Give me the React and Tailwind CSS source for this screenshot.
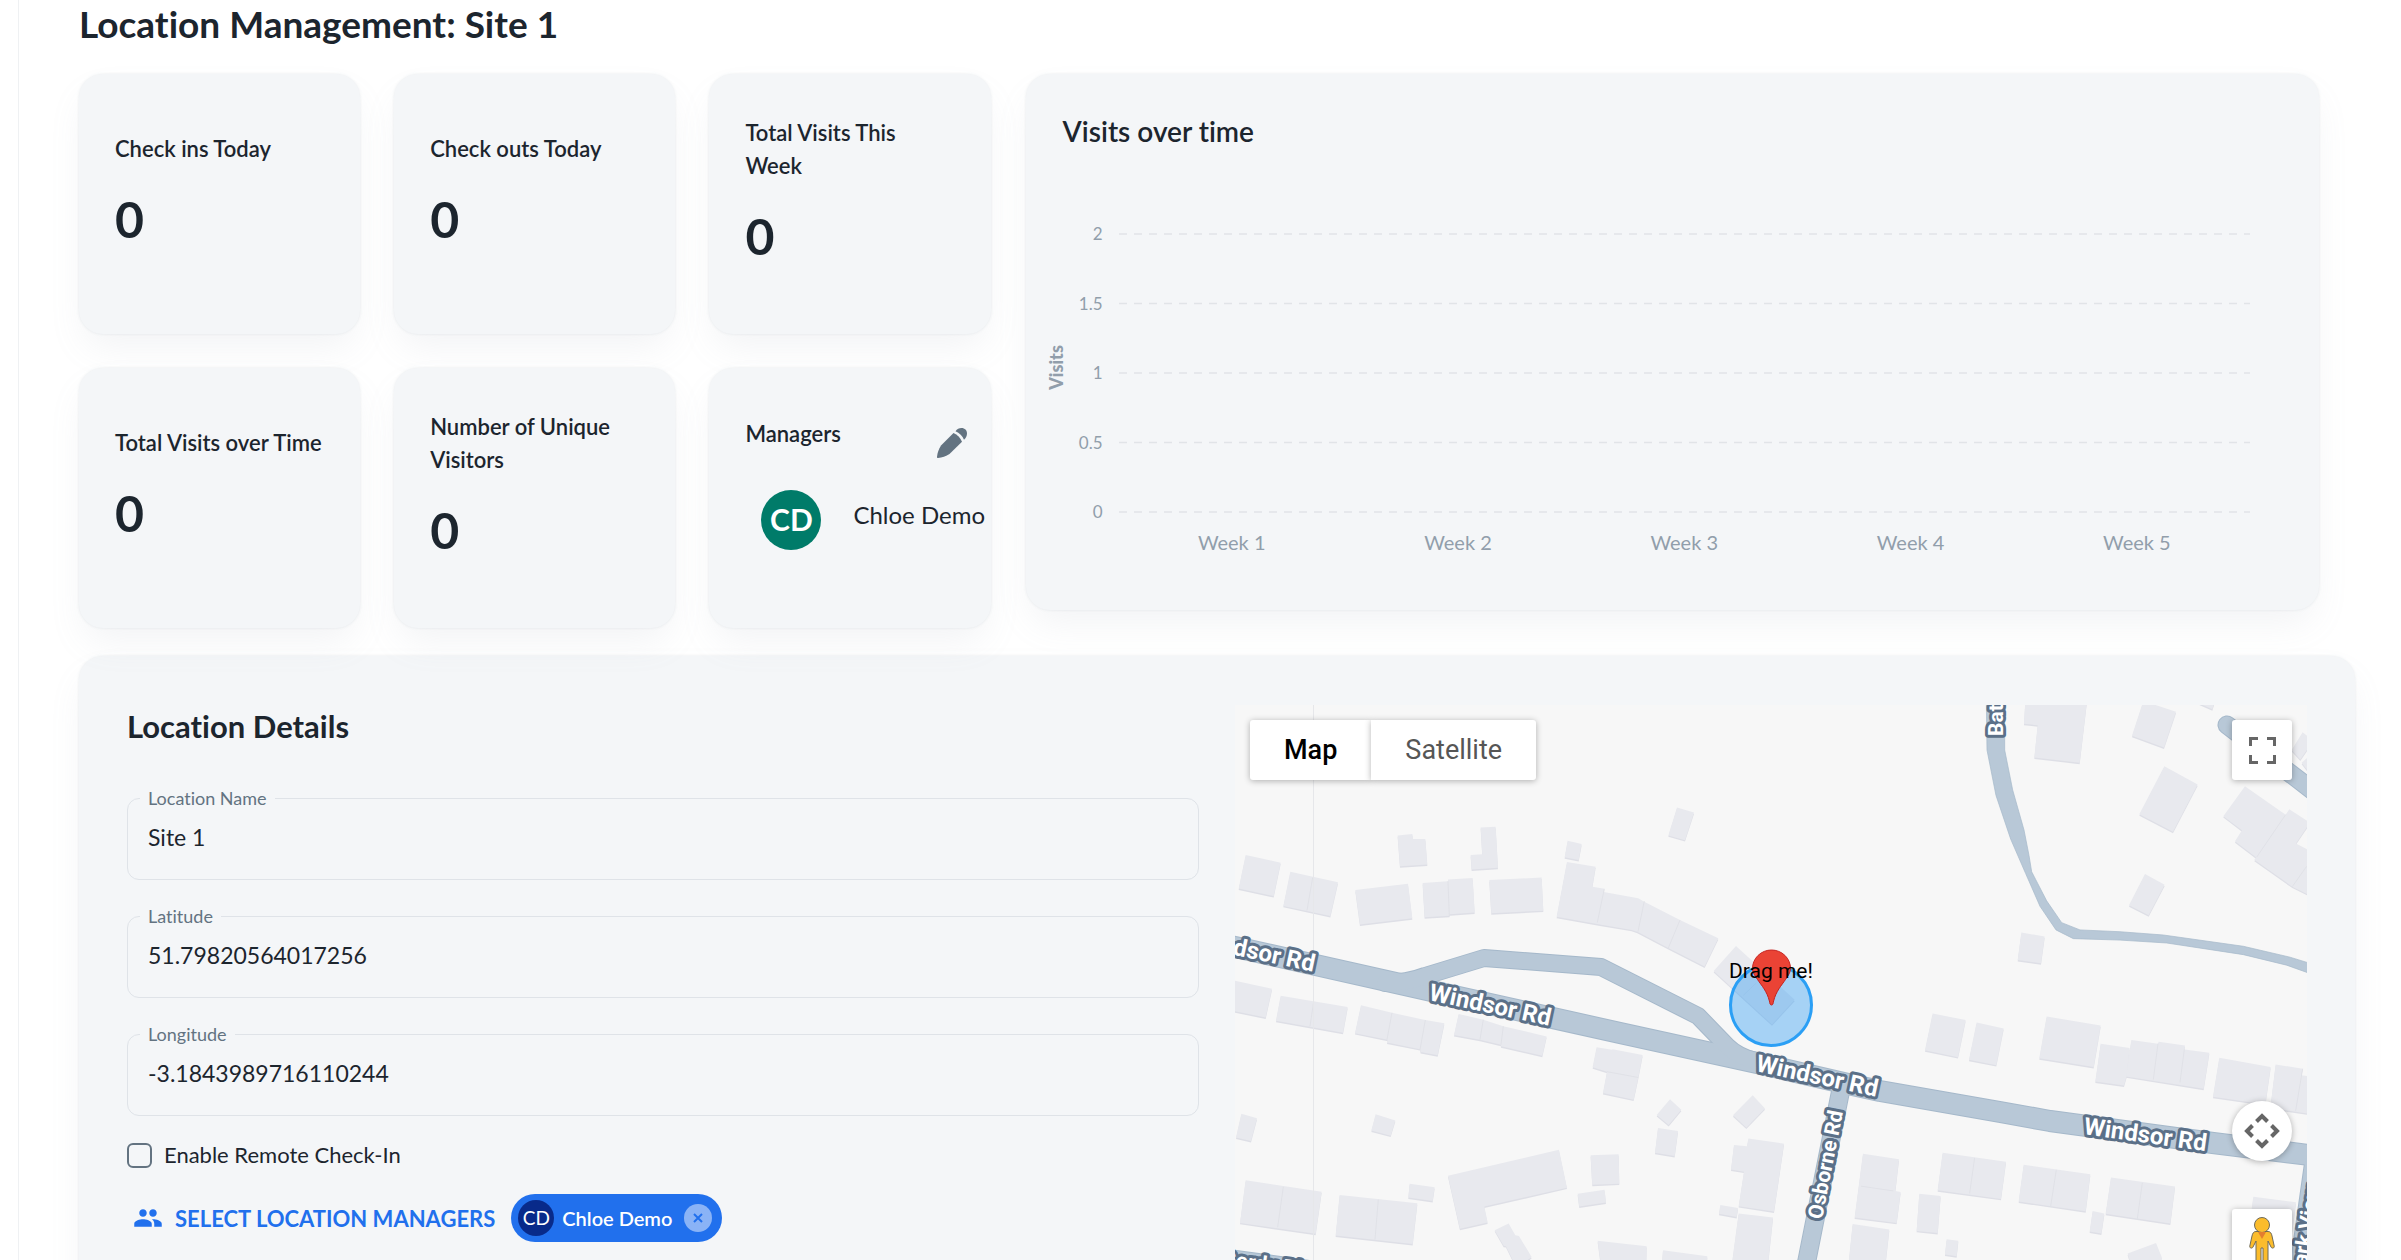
import { useState } from 'react';
import { MdGroup } from 'react-icons/md';

const stats = [
  { label: 'Check ins Today', value: 0 },
  { label: 'Check outs Today', value: 0 },
  { label: 'Total Visits This Week', value: 0 },
  { label: 'Total Visits over Time', value: 0 },
  { label: 'Number of Unique Visitors', value: 0 },
];

const ticks = ['2', '1.5', '1', '0.5', '0'];
const weeks = ['Week 1', 'Week 2', 'Week 3', 'Week 4', 'Week 5'];

// Building outlines, grouped by map tile. Every tile has its own coordinates.
const tiles = [
  {
    id: 'west',
    transform: 'translate(-15 -15) scale(0.3333 0.3635)',
    buildings: [
      '77,454 182,475 161,567 56,546',
      '211,500 354,529 331,622 190,594',
      '406,550 564,533 577,628 420,645',
      '608,531 684,526 684,521 758,517 764,612 690,617 688,621 614,625',
      '808,523 965,516 970,607 814,614',
      '533,400 577,396 579,410 616,410 622,480 540,485',
      '782,378 827,376 834,489 755,494 752,454 787,452',
      '1043,415 1085,424 1076,468 1034,460',
      '1041,473 1127,486 1117,541 1153,547 1151,556 1255,573 1270,581 1380,633 1495,683 1454,761 1345,710 1252,665 1235,660 1140,645 1010,624',
      '40,799 156,822 137,901 40,883',
      '182,841 383,872 369,943 168,910',
      '423,867 516,888 616,908 673,917 653,1005 602,996 600,988 501,970 503,962 405,944',
      '716,891 790,907 850,925 980,953 967,1006 843,980 843,976 780,962 702,949',
      '1130,983 1176,990 1178,988 1268,1004 1255,1066 1241,1127 1149,1109 1161,1050 1118,1038',
      '64,1166 111,1178 93,1241 48,1231',
      '467,1167 526,1184 512,1226 454,1212',
      '77,1349 305,1380 287,1496 60,1466',
      '359,1389 592,1412 578,1524 347,1501',
      '569,1358 644,1368 638,1406 565,1396',
      '684,1336 1017,1265 1041,1369 793,1421 803,1465 720,1482',
      '1112,1280 1196,1277 1198,1358 1117,1361',
      '1073,1386 1154,1375 1158,1410 1078,1421',
      '824,1486 866,1468 886,1500 897,1502 935,1560 890,1590 858,1530 851,1529',
      '1133,1515 1280,1530 1276,1700 1160,1700',
    ],
    walls: 'M278 516L261 607M684 526L688 621M1153 547L1132 640M281 858L270 925M516 888L501 962M616 908L600 990M790 907L780 962M850 925L843 976M190 1367L173 1478M475 1402L465 1512M1273 581L1254 665M1380 633L1345 710M1161 1050L1255 1066',
  },
  {
    id: 'center',
    transform: 'translate(365 -15) scale(0.3333 0.3635)',
    buildings: [
      '231,323 282,337 255,413 205,400',
      '408,704 584,852 516,920 341,773',
      '998,890 1097,908 1074,1010 975,991',
      '1130,915 1211,931 1189,1032 1107,1017',
      '210,1126 244,1155 206,1197 170,1169',
      '174,1205 234,1213 224,1282 165,1273',
      '458,1115 495,1151 439,1204 399,1170',
      '445,1234 552,1248 522,1435 416,1420 432,1325 393,1319 402,1252 441,1255',
      '361,1417 414,1425 410,1450 357,1441',
      '416,1440 519,1451 490,1700 378,1700',
      '189,1541 322,1558 310,1700 176,1700',
      '789,1276 897,1291 886,1378 902,1381 890,1466 764,1451',
      '758,1469 868,1484 842,1700 732,1700',
      '958,1386 1022,1392 1013,1494 950,1488',
      '1040,1511 1075,1515 1070,1558 1035,1553',
      '1028,1273 1218,1298 1203,1400 1013,1376',
    ],
    walls: 'M1124 1287L1109 1385M783 1365L880 1378M470 805L430 840',
  },
  {
    id: 'east',
    transform: 'translate(745 -15) scale(0.3333 0.3635)',
    buildings: [
      '136,30 321,30 299,200 163,186 173,97 132,93',
      '490,30 588,60 552,158 456,126',
      '640,30 705,30 697,53',
      '553,210 653,260 579,390 478,342',
      '495,506 554,536 506,620 447,592',
      '124,667 194,678 183,752 113,743',
      '200,898 362,923 341,1037 178,1013',
      '362,973 449,985 440,1062 432,1088 346,1077',
      '454,963 534,973 536,968 615,978 613,989 688,998 671,1097 438,1063',
      '718,1012 872,1037 856,1140 699,1119',
      '887,1030 968,1042 964,1060 990,1063 990,1166 871,1150',
      '131,1306 331,1332 317,1434 116,1407',
      '393,1341 585,1366 571,1468 377,1441',
      '338,1433 373,1440 364,1495 329,1490',
      '443,1550 528,1521 545,1560 540,1620 470,1640',
      '820,1394 948,1409 935,1500 805,1500',
      '968,116 1000,140 961,191 935,165',
      '965,200 990,180 990,230',
      '795,265 917,343 928,328 990,365 948,422 990,442 990,565 937,541 823,467 828,460 765,416 786,386 730,347',
    ],
    walls: 'M917 343L830 460M534 973L520 1072M613 989L600 1080M229 1320L212 1420M487 1356L472 1455M968 1042L947 1158M980 485L937 541',
  },
];

const roads = [
  { width: 20, d: 'M-20 238L0 242L192 285L385 328L522 358L613 379L645 386L765 407L815 416L978 438L1090 452' },
  { width: 16, d: 'M150 278Q172 278 190 271L249 253L366 262L463 311L492 341Q502 351 520 356' },
  { width: 17, d: 'M606 384L572 555L558 625' },
  { width: 17, d: 'M992 20L1090 95' },
  { width: 17, d: 'M1079 455L1062 575L1056 625' },
  { width: 20, d: 'M-20 553L110 571' },
];

const batRoad =
  '19,30 21,165 48,290 92,410 137,505 180,595 228,660 280,684 420,688 560,696 790,728 920,757 990,780 990,752 930,735 790,705 550,674 420,665 300,660 245,640 200,580 155,500 147,455 132,385 98,275 74,165 74,30';

const roadLabels = [
  { text: 'Windsor Rd', x: -43, y: 241, angle: 12, size: 24 },
  { text: 'Windsor Rd', x: 193, y: 295, angle: 12, size: 24 },
  { text: 'Windsor Rd', x: 520, y: 366, angle: 12, size: 24 },
  { text: 'Windsor Rd', x: 848, y: 429, angle: 8, size: 24 },
  { text: 'Osborne Rd', x: 587, y: 515, angle: -79, size: 21 },
  { text: 'Park View', x: 1070, y: 574, angle: -81, size: 21 },
  { text: 'Bat', x: 768, y: 31, angle: -90, size: 21 },
  { text: 'Gordy Pl', x: -14, y: 560, angle: 8, size: 21 },
];

function Card({ className = '', children }) {
  return (
    <div className={`rounded-3xl bg-[#f4f6f8] shadow-[0_0_3px_rgba(145,158,171,0.2),0_18px_36px_-6px_rgba(145,158,171,0.12)] ${className}`}>
      {children}
    </div>
  );
}

function StatCard({ label, value }) {
  return (
    <Card className="flex h-[260px] flex-col justify-center px-9 pb-[3px]">
      <h3 className="text-[22px] leading-[33px] font-semibold">{label}</h3>
      <p className="my-[18px] text-[50px] leading-[72px] font-bold">{value}</p>
    </Card>
  );
}

function PenIcon() {
  return (
    <svg className="size-[30px]" viewBox="0 0 30 30" fill="currentColor">
      <path d="M18.500 3.200C20 1.200 22 0 24.500 0 27.800 0 30 2.400 30 5.400c0 2.500-1.200 4.600-3 6.300C25.500 8 22.500 4.800 18.500 3.200z" />
      <path d="M16.500 5c3.800 1.500 7 4.800 8.500 8.700L12.500 26C9 28.400 5 29.700 1 30c-.8 0-1-.3-1-1 .3-4 1.800-8 4-11.500z" />
    </svg>
  );
}

function ManagersCard() {
  return (
    <Card className="h-[260px] pt-11 pl-9">
      <div className="flex items-start justify-between pr-6">
        <h3 className="text-[22px] leading-[44px] font-semibold">Managers</h3>
        <button type="button" aria-label="Edit managers" className="mt-4 text-[#637381]">
          <PenIcon />
        </button>
      </div>
      <div className="flex gap-8 pt-8 pl-4">
        <span className="flex size-[60px] shrink-0 items-center justify-center rounded-full bg-[#007b69] pb-0.5 text-[30px] font-bold text-white">
          CD
        </span>
        <span className="text-2xl leading-[50px] whitespace-nowrap">Chloe Demo</span>
      </div>
    </Card>
  );
}

function VisitsChart() {
  return (
    <Card className="flex h-[536px] flex-col px-[37px] pt-9">
      <h2 className="text-[28px] leading-[42px] font-semibold">Visits over time</h2>
      <div className="flex flex-1 pt-[68px] text-[#919eab]">
        <div className="flex h-[294px] w-0 items-center justify-center">
          <span className="-rotate-90 pb-3 text-[18px] font-black">Visits</span>
        </div>
        <ul className="flex h-[306px] w-10 flex-col justify-between text-right text-[17px] leading-[28px]">
          {ticks.map((tick) => (
            <li key={tick}>{tick}</li>
          ))}
        </ul>
        <div className="flex-1 pr-8 pl-4">
          <svg className="block h-[306px] w-full" aria-hidden="true">
            {ticks.map((tick, i) => (
              <line
                key={tick}
                x1="0"
                x2="100%"
                y1={14 + i * 69.5}
                y2={14 + i * 69.5}
                stroke="#e1e4e8"
                strokeWidth="1.5"
                strokeDasharray="8 7"
              />
            ))}
          </svg>
          <ul className="grid grid-cols-5 pt-0.5 text-center text-[20px] leading-[28px]">
            {weeks.map((week) => (
              <li key={week}>{week}</li>
            ))}
          </ul>
        </div>
      </div>
    </Card>
  );
}

function TextField({ id, label, value, onChange }) {
  return (
    <fieldset className="h-[92px] min-w-0 rounded-xl border border-[#dfe3e8] px-3">
      <legend className="px-2 text-[18px] leading-[20px] text-[#637381]">
        <label htmlFor={id}>{label}</label>
      </legend>
      <input
        id={id}
        type="text"
        value={value}
        onChange={(e) => onChange(e.target.value)}
        className="block h-[58px] w-full bg-transparent px-2 text-[23px] outline-none"
      />
    </fieldset>
  );
}

function ManagerChip({ name, initials }) {
  return (
    <span className="flex h-12 items-center rounded-full bg-[#2170ed] pr-2.5 pl-[7px] text-white">
      <span className="flex size-9 items-center justify-center rounded-full bg-[#082a8a] text-[19px]">{initials}</span>
      <span className="pr-3 pl-2 text-[20px] font-semibold">{name}</span>
      <button type="button" aria-label={`Remove ${name}`} className="flex size-7 items-center justify-center rounded-full bg-[#8ab3f6]">
        <svg className="size-2.5" viewBox="0 0 10 10" fill="none" stroke="#2170ed" strokeWidth="2">
          <path d="M1 1l8 8M9 1L1 9" />
        </svg>
      </button>
    </span>
  );
}

function StreetMap() {
  return (
    <svg className="block h-full w-full" viewBox="0 0 1072 620" preserveAspectRatio="xMidYMin slice" role="img" aria-label="Street map">
      <rect width="1072" height="620" fill="#f7f7f7" />
      {tiles.map((tile) => (
        <g key={tile.id} transform={tile.transform}>
          <g fill="#dedfe6" transform="translate(0 4)">
            {tile.buildings.map((points) => (
              <polygon key={points} points={points} />
            ))}
          </g>
          <g fill="#e8e9ee">
            {tile.buildings.map((points) => (
              <polygon key={points} points={points} />
            ))}
          </g>
          <path d={tile.walls} stroke="#dfe0e6" strokeWidth="2.5" />
        </g>
      ))}
      <path d="M78.5 0V620" stroke="#e6e7ea" />

      <g fill="none" strokeLinecap="round" strokeLinejoin="round">
        {roads.map((road) => (
          <path key={road.d} d={road.d} stroke="#a5b8ca" strokeWidth={road.width + 2} />
        ))}
        <polygon points={batRoad} transform={tiles[2].transform} fill="#b8c8d7" stroke="#a5b8ca" strokeWidth="2" />
        {roads.map((road) => (
          <path key={road.d} d={road.d} stroke="#b8c8d7" strokeWidth={road.width} />
        ))}
      </g>

      <g fontFamily="Roboto, sans-serif" fontWeight="700" fill="#ffffff" stroke="#5b7088" strokeWidth="6" strokeLinejoin="round" paintOrder="stroke">
        {roadLabels.map((label) => (
          <text key={`${label.x}-${label.y}`} fontSize={label.size} transform={`translate(${label.x} ${label.y}) rotate(${label.angle})`}>
            {label.text}
          </text>
        ))}
      </g>

      <circle cx="536" cy="300" r="40.5" fill="#2196f3" fillOpacity="0.38" stroke="#2b9ff5" strokeWidth="3" />
      <path
        d="M536.5 300c-1.5 0-1.600-1.500-2.100-4-2.500-10-7.900-15.500-11.900-21.500-3-4.500-5-7-5-11a19 18.500 0 0 1 38 0c0 4-2 6.500-5 11-4 6-9.400 11.500-11.900 21.500-.5 2.500-.6 4-2.100 4z"
        fill="#ea4335"
        stroke="#c5221f"
      />
      <text x="536" y="273" textAnchor="middle" fontFamily="Roboto, sans-serif" fontSize="21">
        Drag me!
      </text>
    </svg>
  );
}

function MapPanel() {
  const shadow = 'bg-white shadow-[0_1px_6px_rgba(0,0,0,0.3)]';

  return (
    <div className="relative h-[620px] overflow-hidden font-[Roboto,sans-serif]">
      <StreetMap />
      <div className="absolute top-[15px] left-[15px] flex text-[27px]">
        <button type="button" className={`h-[60px] rounded-l-[3px] px-[34px] font-medium text-black ${shadow}`}>
          Map
        </button>
        <button type="button" className={`h-[60px] rounded-r-[3px] px-[34px] text-[#565656] ${shadow}`}>
          Satellite
        </button>
      </div>
      <button
        type="button"
        aria-label="Toggle fullscreen view"
        className={`absolute top-[15px] right-[15px] flex size-[60px] items-center justify-center rounded-[3px] ${shadow}`}
      >
        <svg className="size-[27px]" viewBox="0 0 18 18" fill="#666666">
          <path d="M0 0v6h2V2h4V0H0zm16 0h-4v2h4v4h2V0h-2zm0 16h-4v2h6v-6h-2v4zM2 12H0v6h6v-2H2v-4z" />
        </svg>
      </button>
      <div className="absolute right-[15px] bottom-14 flex flex-col gap-12">
        <button type="button" aria-label="Map camera controls" className={`flex size-[60px] items-center justify-center rounded-full ${shadow}`}>
          <svg className="size-9" viewBox="0 0 36 36" fill="none" stroke="#666666" strokeWidth="4">
            <path d="M12.500 8.500L18 3l5.500 5.500M12.500 27.500L18 33l5.500-5.500M8.500 12.500L3 18l5.500 5.500M27.500 12.500L33 18l-5.500 5.500" />
          </svg>
        </button>
        <button type="button" aria-label="Drag Pegman onto the map" className={`flex h-[60px] w-[60px] justify-center rounded-[3px] pt-2 ${shadow}`}>
          <svg className="h-12 w-7" viewBox="0 0 28 48">
            <g fill="#fbbc2c" stroke="#6e6a5a" strokeWidth="1">
              <path d="M8 14.500h12c2.500 0 3.500 2 4 4.500l2.200 10c.5 2-2.200 3-3.200 1L20 24v20c0 2-5 2-5 0V31h-2v13c0 2-5 2-5 0V24l-3 6c-1 2-3.700 1-3.200-1L4 19c.5-2.500 1.500-4.500 4-4.500z" />
              <circle cx="14" cy="8" r="7.500" />
            </g>
            <path d="M10 15h8l-4 7z" fill="#e37d2f" />
          </svg>
        </button>
      </div>
    </div>
  );
}

export default function App() {
  const [location, setLocation] = useState({
    name: 'Site 1',
    latitude: '51.79820564017256',
    longitude: '-3.1843989716110244',
  });
  const [remoteCheckIn, setRemoteCheckIn] = useState(false);

  return (
    <div className="h-screen overflow-hidden bg-white pl-[18px] font-[Lato,sans-serif] text-[#1c252e] [font-variant-ligatures:none]">
      <main className="border-l border-[#eff1f3] pr-[46px] pl-[60px]">
        <h1 className="pt-[3px] pb-[29px] text-[37px] leading-[42px] font-bold">Location Management: Site 1</h1>

        <div className="grid grid-cols-[912fr_1294fr] items-start gap-[35px] pr-9">
          <div className="grid grid-cols-3 gap-[34px]">
            {stats.map((stat) => (
              <StatCard key={stat.label} label={stat.label} value={stat.value} />
            ))}
            <ManagersCard />
          </div>
          <VisitsChart />
        </div>

        <Card className="mt-7 grid grid-cols-2 gap-9 px-12 pt-[49px] pb-12">
          <form onSubmit={(e) => e.preventDefault()}>
            <h2 className="text-[31px] leading-[42px] font-bold">Location Details</h2>
            <div className="flex flex-col gap-[26px] pt-[41px]">
              <TextField
                id="location-name"
                label="Location Name"
                value={location.name}
                onChange={(name) => setLocation({ ...location, name })}
              />
              <TextField
                id="latitude"
                label="Latitude"
                value={location.latitude}
                onChange={(latitude) => setLocation({ ...location, latitude })}
              />
              <TextField
                id="longitude"
                label="Longitude"
                value={location.longitude}
                onChange={(longitude) => setLocation({ ...location, longitude })}
              />
            </div>
            <label className="flex w-fit items-center gap-3 pt-6 text-[22px] leading-[30px]">
              <input
                type="checkbox"
                checked={remoteCheckIn}
                onChange={(e) => setRemoteCheckIn(e.target.checked)}
                className="size-[25px] appearance-none rounded-[6px] border-2 border-[#637381] checked:bg-[#2170ed]"
              />
              Enable Remote Check-In
            </label>
            <div className="flex items-center gap-4 pt-6">
              <button type="button" className="flex items-center gap-3 pl-1.5 text-[22px] font-bold text-[#2170ed] uppercase">
                <MdGroup size={30} />
                Select Location Managers
              </button>
              <ManagerChip name="Chloe Demo" initials="CD" />
            </div>
          </form>
          <MapPanel />
        </Card>
      </main>
    </div>
  );
}
